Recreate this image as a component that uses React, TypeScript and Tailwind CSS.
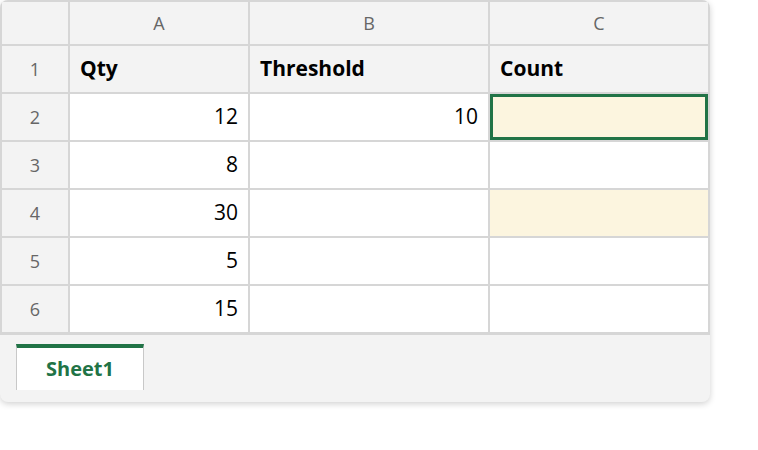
import React from 'react';

const cols = ['A', 'B', 'C'];

const rows = [
  { n: 1, cells: ['Qty', 'Threshold', 'Count'], head: true },
  { n: 2, cells: ['12', '10', ''] },
  { n: 3, cells: ['8', '', ''] },
  { n: 4, cells: ['30', '', ''] },
  { n: 5, cells: ['5', '', ''] },
  { n: 6, cells: ['15', '', ''] },
];

const App = () => {
  return (
    <div className="min-h-screen bg-white font-['Open_Sans',sans-serif]">
      <div className="w-[710px] rounded-lg overflow-hidden bg-[#f3f3f3] shadow-[0_2px_6px_rgba(0,0,0,0.18)]">
        {/* Grid */}
        <div className="grid grid-cols-[66px_178px_238px_218px] grid-rows-[42px_repeat(6,46px)] gap-[2px] bg-[#d6d6d6] pt-[2px] px-[2px] pb-[3px]">
          <div className="bg-[#f3f3f3]" />
          {cols.map((c) => (
            <div key={c} className="bg-[#f3f3f3] flex items-center justify-center text-[18px] text-[#666]">
              {c}
            </div>
          ))}
          {rows.map((r) => (
            <React.Fragment key={r.n}>
              <div className="bg-[#f3f3f3] flex items-center justify-center text-[18px] text-[#666]">
                {r.n}
              </div>
              {r.cells.map((v, i) => {
                const selected = r.n === 2 && i === 2;
                const cream = (r.n === 2 || r.n === 4) && i === 2;
                let cls = 'flex items-center px-[10px] text-[21px] text-black ';
                if (r.head) cls += 'bg-[#f3f3f3] font-bold justify-start ';
                else if (cream) cls += 'bg-[#fcf5df] justify-end ';
                else cls += 'bg-white justify-end ';
                if (selected) cls += 'shadow-[inset_0_0_0_3px_#217346] ';
                return (
                  <div key={i} className={cls}>
                    {v}
                  </div>
                );
              })}
            </React.Fragment>
          ))}
        </div>

        {/* Sheet tabs */}
        <div className="h-[67px] pt-[9px] pl-[16px]">
          <div className="w-[128px] h-[46px] bg-white border-t-4 border-t-[#217346] border-x border-x-[#c8c8c8] flex items-center justify-center text-[20px] font-bold text-[#217346]">
            Sheet1
          </div>
        </div>
      </div>
    </div>
  );
};

export default App;
